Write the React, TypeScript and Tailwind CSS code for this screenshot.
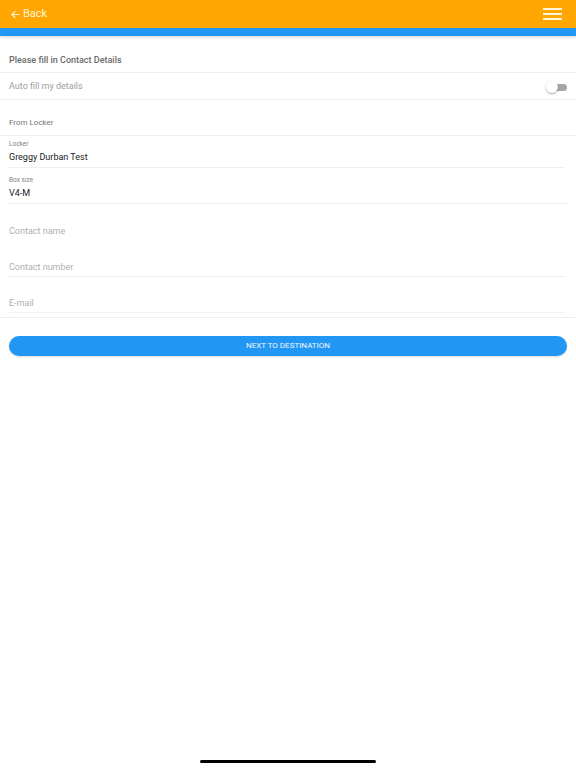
export default function App() {
  return (
    <div className="relative min-h-[768px] w-[576px] bg-white font-['Roboto',sans-serif]">
      <header className="flex h-[28px] items-center justify-between bg-[#ffa600] pl-[10px] pr-[14px]">
        <div className="flex items-center gap-[2px] pt-[1px] text-[11px] text-[#fff6dc]">
          <svg width="11" height="11" viewBox="0 0 24 24" fill="none" stroke="currentColor" strokeWidth="2.4" strokeLinecap="round" strokeLinejoin="round">
            <path d="M20 12H5" />
            <path d="M11 5l-7 7 7 7" />
          </svg>
          <span>Back</span>
        </div>
        <div className="flex w-[19px] flex-col gap-[3px]">
          <span className="h-[2px] bg-[#fff6dc]" />
          <span className="h-[2px] bg-[#fff6dc]" />
          <span className="h-[2px] bg-[#fff6dc]" />
        </div>
      </header>
      <div className="h-[8px] bg-[#2196f3] shadow-[0_2px_3px_rgba(0,0,0,0.12)]" />

      <div className="flex h-[37px] items-end border-b border-[#efefef] pb-[5px] pl-[9px] text-[9px] font-medium text-[#6b6b6b]">
        Please fill in Contact Details
      </div>
      <div className="flex h-[27px] items-center justify-between border-b border-[#efefef] pl-[9px] pr-[9px] pt-[2px]">
        <span className="text-[9px] text-[#9e9e9e]">Auto fill my details</span>
        <div className="relative h-[7px] w-[16px] rounded-full bg-[#a6a6a6]">
          <span className="absolute left-[-5px] top-[-2.5px] h-[12px] w-[12px] rounded-full bg-white shadow-[0_1px_2px_rgba(0,0,0,0.35)]" />
        </div>
      </div>
      <div className="flex h-[36px] items-end border-b border-[#efefef] pb-[6px] pl-[9px] text-[8px] font-normal text-[#757575]">
        From Locker
      </div>

      <div className="ml-[9px] mr-[11px] h-[32px] border-b border-[#efefef] pt-[4px]">
        <div className="text-[6.5px] text-[#808080]">Locker</div>
        <div className="mt-[1px] text-[9px] text-[#212121]">Greggy Durban Test</div>
      </div>
      <div className="ml-[9px] mr-[8px] h-[36px] border-b border-[#efefef] pt-[8px]">
        <div className="text-[6.5px] text-[#808080]">Box size</div>
        <div className="mt-[1px] text-[9px] text-[#212121]">V4-M</div>
      </div>
      <div className="ml-[9px] mr-[11px] flex h-[37px] items-end pb-[3px] text-[9px] text-[#b0b0b0]">
        Contact name
      </div>
      <div className="ml-[9px] mr-[11px] flex h-[36px] items-end border-b border-[#efefef] pb-[2px] text-[9px] text-[#b0b0b0]">
        Contact number
      </div>
      <div className="border-b border-[#efefef] pb-[4px]">
        <div className="ml-[9px] mr-[11px] flex h-[36px] items-end border-b border-[#f3f3f3] pb-[2px] text-[9px] text-[#b0b0b0]">
          E-mail
        </div>
      </div>

      <div className="px-[9px] pt-[18px]">
        <button className="flex h-[20px] w-full items-center justify-center rounded-full bg-[#2196f3] text-[8px] font-normal text-[#f2f8ff] shadow-[0_1px_2px_rgba(0,0,0,0.15)]">
          NEXT TO DESTINATION
        </button>
      </div>

      <div className="absolute bottom-[5px] left-[200px] h-[3px] w-[176px] rounded-full bg-black" />
    </div>
  );
}
